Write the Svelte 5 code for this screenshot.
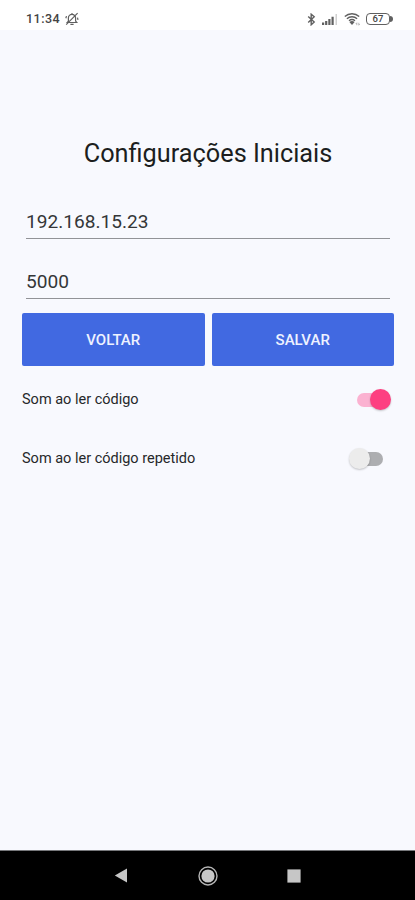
<script>
  let host = $state('192.168.15.23');
  let port = $state('5000');

  let options = $state([
    { id: 'read', label: 'Som ao ler código', on: true },
    { id: 'repeated', label: 'Som ao ler código repetido', on: false }
  ]);
</script>

<div class="screen">
  <header class="status">
    <span class="time">11:34</span>
    <svg class="bell" width="14" height="14" viewBox="0 0 14 14" aria-hidden="true">
      <path d="M2.2 10.5h9.6L10.6 9V6a3.6 3.6 0 0 0-7.2 0v3zM7 2.4V1M5.4 12.4h3.2M1.2 12.6 12.6 1.2M.8 6.3l.7-2.2M13 7.9l-.5-2.3" />
    </svg>

    <div class="indicators">
      <svg width="9" height="13" viewBox="0 0 9 13" aria-hidden="true">
        <path class="line" d="m1.2 3.5 6 5.6-3 2.7V1.2l3 2.6-6 5.6" />
      </svg>
      <svg class="signal" width="16" height="11" viewBox="0 0 16 11" aria-hidden="true">
        <path d="M0 8.5h2.2V11H0zM3.1 7h2.2v4H3.1zM6.3 5h2.2v6H6.3zM9.5 2.7h2.2V11H9.5z" />
        <path class="faint" d="M13.5 0h1.5v11h-1.5z" />
      </svg>
      <svg class="wifi" width="16" height="14" viewBox="0 0 16 14" aria-hidden="true">
        <path class="line" d="M.8 4.4c4-3.6 10.4-3.6 14.4 0M2.9 6.7c2.9-2.6 7.3-2.6 10.2 0M5 8.8c1.7-1.4 4.3-1.4 6 0" />
        <path d="M8 13 5.4 10c1.5-1.2 3.7-1.2 5.2 0z" />
        <path class="tiny" d="M12.8 13.2v-2.4m-1 1 1-1 M14.8 10.8v2.4m1-1-1 1" />
      </svg>
      <div class="battery"><span class="level">67</span></div>
    </div>
  </header>

  <main>
    <h1>Configurações Iniciais</h1>

    <input class="field" type="text" aria-label="IP" bind:value={host} />
    <input class="field" type="text" inputmode="numeric" aria-label="Porta" bind:value={port} />

    <div class="actions">
      <button class="btn" type="button">VOLTAR</button>
      <button class="btn" type="button">SALVAR</button>
    </div>

    {#each options as option (option.id)}
      <div class="option">
        <span>{option.label}</span>
        <button
          class="switch"
          class:on={option.on}
          type="button"
          role="switch"
          aria-checked={option.on}
          aria-label={option.label}
          onclick={() => (option.on = !option.on)}
        >
          <span class="track"></span>
          <span class="thumb"></span>
        </button>
      </div>
    {/each}
  </main>

  <nav class="navbar">
    <svg width="14" height="15" viewBox="0 0 14 15" aria-hidden="true">
      <path d="M.8 7.4 13 .5v14z" />
    </svg>
    <svg width="20" height="20" viewBox="0 0 20 20" aria-hidden="true">
      <circle cx="10" cy="10" r="6.6" />
      <circle class="ring" cx="10" cy="10" r="9" />
    </svg>
    <svg width="14" height="14" viewBox="0 0 14 14" aria-hidden="true">
      <path d="M.4.4h13.2v13.2H.4z" />
    </svg>
  </nav>
</div>

<style>
  :global(body) {
    margin: 0;
  }

  .screen {
    display: flex;
    flex-direction: column;
    width: 100%;
    height: 100vh;
    background: #f8f9fe;
    color: #26282a;
    font-family: Roboto, sans-serif;
  }

  .status {
    display: flex;
    align-items: center;
    box-sizing: border-box;
    height: 30px;
    padding: 8px 23px 0 26px;
    background: #fff;
    color: #444;
  }

  .time {
    font-size: 12.5px;
    font-weight: 500;
    line-height: 14px;
    letter-spacing: 0.5px;
  }

  .bell {
    margin-left: 5px;
    fill: none;
    stroke: #606060;
    stroke-width: 1.2;
  }

  .indicators {
    display: flex;
    align-items: center;
    margin-left: auto;
    fill: #606060;
  }

  .line {
    fill: none;
    stroke: #606060;
    stroke-width: 1.4;
  }

  .signal {
    margin-left: 6px;
  }

  .faint {
    fill: #d0d0d0;
  }

  .wifi {
    margin: 0 6px 0 6px;
  }

  .tiny {
    fill: none;
    stroke: #999;
    stroke-width: 0.7;
  }

  .battery {
    position: relative;
    box-sizing: border-box;
    width: 24px;
    height: 12px;
    margin-right: 2px;
    border: 1.5px solid #606060;
    border-radius: 4px;
    font-size: 9.5px;
    font-weight: 500;
    line-height: 10px;
    text-align: center;
  }

  .battery::after {
    content: '';
    position: absolute;
    top: 2px;
    right: -4px;
    width: 3px;
    height: 6px;
    border-radius: 0 3px 3px 0;
    background: #606060;
  }

  main {
    flex: 1;
    padding: 107px 21px 0 22px;
  }

  h1 {
    margin: 0 0 38px;
    font-size: 25.3px;
    font-weight: 400;
    line-height: 34px;
    text-align: center;
    color: #1c1e20;
  }

  .field {
    display: block;
    box-sizing: border-box;
    width: calc(100% - 8px);
    height: 30px;
    margin: 0 4px 29.5px;
    padding: 0 0 4px;
    border: 0;
    border-bottom: 1px solid #929397;
    border-radius: 0;
    outline: 0;
    background: transparent;
    color: #343638;
    font: 400 19.1px/25px Roboto, sans-serif;
  }

  .actions {
    display: flex;
    gap: 7px;
    margin-top: -15px;
    margin-bottom: 4px;
  }

  .btn {
    flex: 1;
    height: 53px;
    padding: 0;
    border: 0;
    border-radius: 2px;
    background: #4169e1;
    color: #eef2ff;
    font: 500 15px Roboto, sans-serif;
    cursor: pointer;
  }

  .option {
    display: flex;
    align-items: center;
    justify-content: space-between;
    height: 59px;
    font-size: 14.5px;
  }

  .switch {
    position: relative;
    width: 46px;
    height: 24px;
    padding: 0;
    border: 0;
    background: none;
    cursor: pointer;
  }

  .track {
    position: absolute;
    top: 5px;
    left: 9px;
    width: 26px;
    height: 14px;
    border-radius: 7px;
    background: #adaeb1;
  }

  .thumb {
    position: absolute;
    top: 1px;
    left: 1px;
    width: 21px;
    height: 21px;
    border-radius: 50%;
    background: #ececec;
    box-shadow: 0 1px 2px rgba(0, 0, 0, 0.22);
    transition: left 0.15s;
  }

  .on .track {
    background: #fbb2d1;
  }

  .on .thumb {
    left: 22px;
    background: #fd4081;
  }

  .navbar {
    display: flex;
    align-items: center;
    justify-content: space-between;
    box-sizing: border-box;
    height: 50px;
    padding: 0 114px;
    border-top: 1px solid #77787b;
    background: #000;
    fill: #c6c6c6;
  }

  .ring {
    fill: none;
    stroke: #b5b5b5;
    stroke-width: 1.4;
  }
</style>
